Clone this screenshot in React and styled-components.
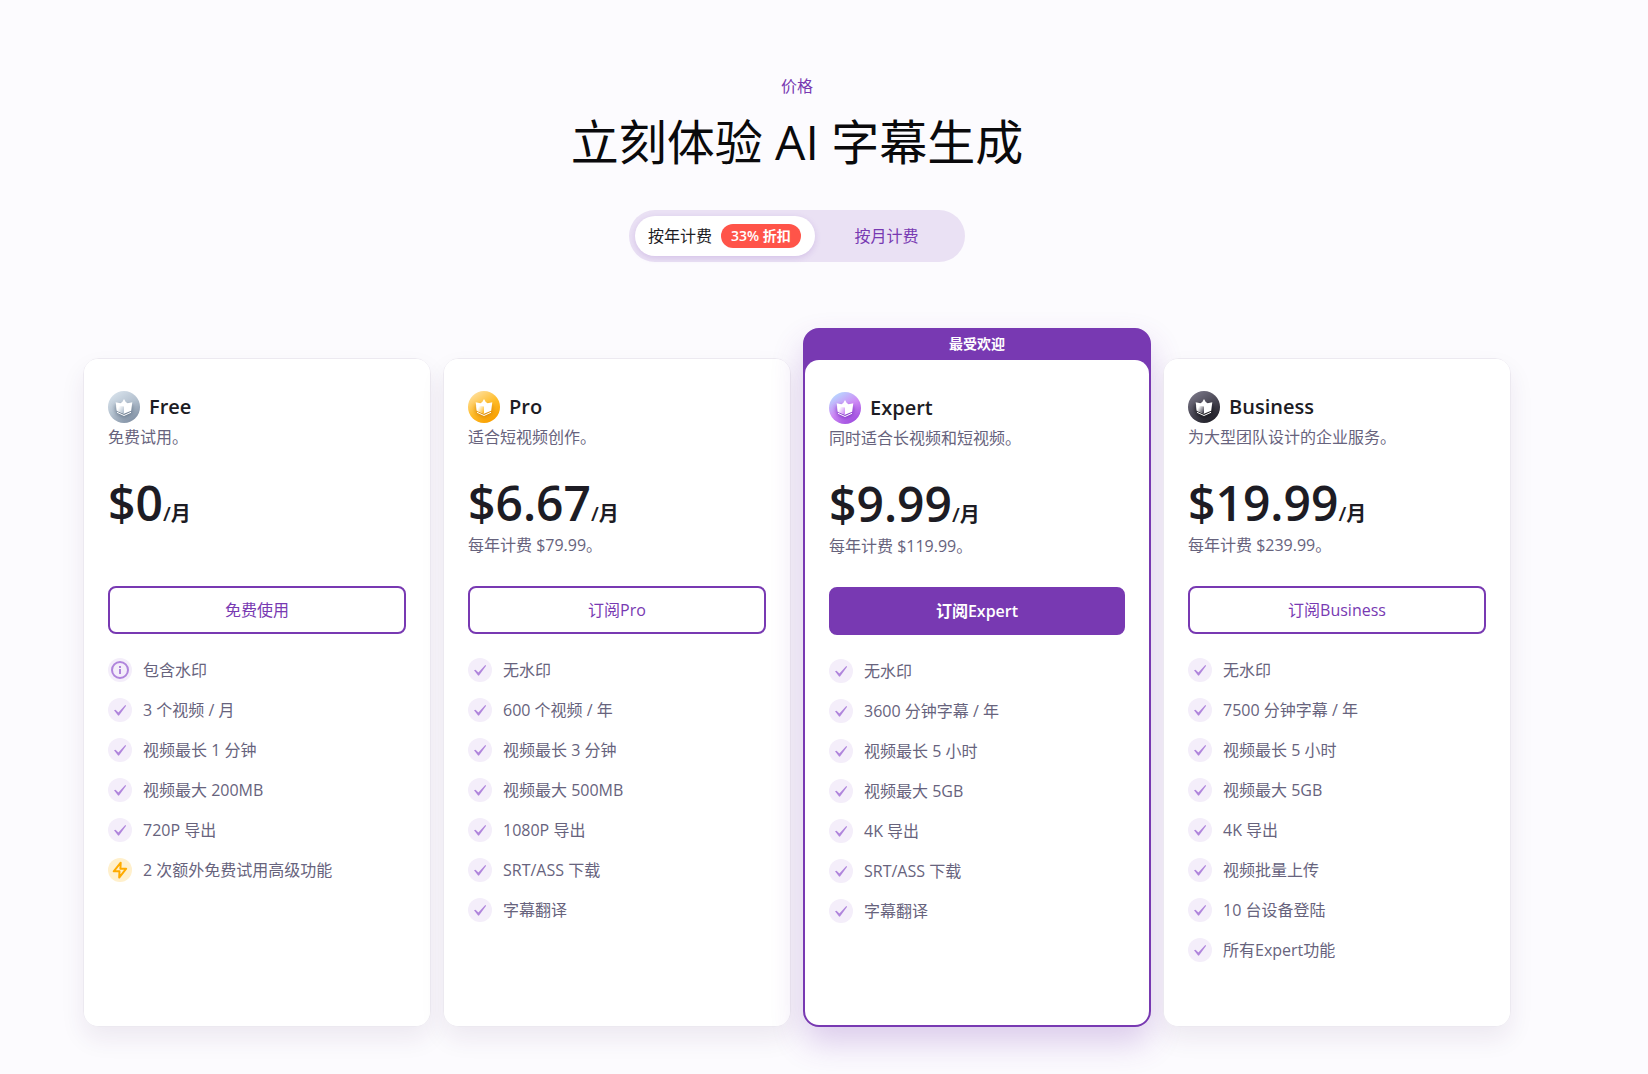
import React, { useState } from 'react';
import styled, { createGlobalStyle } from 'styled-components';

const purple = '#7839b2';
const ink = '#1d1c24';
const muted = '#67637d';

const GlobalStyle = createGlobalStyle`
  * {
    box-sizing: border-box;
  }

  body {
    margin: 0;
    background: #fcfbfe;
    color: ${ink};
    font-family: 'Open Sans', 'Noto Sans CJK SC', sans-serif;
    font-size: 16px;
    line-height: 24px;
  }

  h1, h2, p, ul {
    margin: 0;
    padding: 0;
    font-weight: inherit;
  }

  button {
    border: 0;
    font: inherit;
    cursor: pointer;
  }
`;

const Page = styled.main`
  padding: 74px 137px 47px 83px;
`;

const Header = styled.header`
  display: flex;
  flex-direction: column;
  align-items: center;
  margin-bottom: 66px;
`;

const Eyebrow = styled.p`
  color: ${purple};
`;

const Title = styled.h1`
  margin: 12px 0 36px;
  color: #0a0a0c;
  font-size: 48px;
  line-height: 64px;
`;

const Toggle = styled.div`
  display: flex;
  width: 336px;
  height: 52px;
  padding: 6px;
  border-radius: 26px;
  background: #eae1f4;
`;

const Period = styled.button`
  display: flex;
  align-items: center;
  justify-content: center;
  flex: ${({ $wide }) => ($wide ? 'none' : '1')};
  gap: 9px;
  padding: 0 14px 0 13px;
  border-radius: 20px;
  background: ${({ $active }) => ($active ? '#fff' : 'transparent')};
  box-shadow: ${({ $active }) => ($active ? '0 2px 6px rgba(118, 56, 177, 0.18)' : 'none')};
  color: ${({ $active }) => ($active ? ink : purple)};
`;

const Discount = styled.span`
  padding: 0 10px;
  border-radius: 12px;
  background: #ff5449;
  color: #fff;
  font-size: 14px;
  font-weight: 600;
`;

const Plans = styled.section`
  display: grid;
  grid-template-columns: repeat(4, minmax(0, 1fr));
  gap: 12px;
`;

const Card = styled.article`
  display: flex;
  flex-direction: column;
  margin-top: ${({ $popular }) => ($popular ? 0 : '30px')};
  border: ${({ $popular }) => ($popular ? `2px solid ${purple}` : '1px solid #ece9f0')};
  border-radius: 16px;
  background: ${({ $popular }) => ($popular ? purple : '#fff')};
  box-shadow: ${({ $popular }) =>
    $popular ? '0 16px 32px rgba(118, 56, 177, 0.24)' : '0 12px 24px rgba(60, 30, 90, 0.08)'};
`;

const Ribbon = styled.p`
  height: 30px;
  padding-top: 2px;
  color: #fff;
  font-size: 14px;
  font-weight: 600;
  text-align: center;
`;

const CardBody = styled.div`
  flex: 1;
  padding: 32px 24px 64px;
  border-radius: 14px;
  background: #fff;
`;

const PlanHeading = styled.div`
  display: flex;
  align-items: center;
  gap: 9px;
  height: 32px;
  margin-bottom: 2px;
`;

const PlanName = styled.h2`
  font-size: 20px;
  font-weight: 600;
`;

const Note = styled.p`
  height: 24px;
  color: ${muted};
`;

const Price = styled.p`
  height: 56px;
  margin: 26px 0 2px;
  font-size: 48px;
  font-weight: 600;
  line-height: 56px;
`;

const PerMonth = styled.span`
  font-size: 20px;
  line-height: 24px;
`;

const Subscribe = styled.button`
  display: block;
  width: 100%;
  height: 48px;
  margin: 29px 0 24px;
  border: 2px solid ${purple};
  border-radius: 8px;
  background: ${({ $filled }) => ($filled ? purple : '#fff')};
  color: ${({ $filled }) => ($filled ? '#fff' : purple)};
  font-weight: ${({ $filled }) => ($filled ? 600 : 400)};
`;

const Features = styled.ul`
  display: grid;
  gap: 16px;
  list-style: none;
`;

const Feature = styled.li`
  display: flex;
  align-items: center;
  gap: 11px;
  color: ${muted};
`;

const CrownIcon = ({ id, colors, shade }) => (
  <svg width="32" height="32" viewBox="0 0 32 32" aria-hidden="true">
    <defs>
      <linearGradient id={`${id}-bg`} x1="0.2" y1="0.1" x2="0.75" y2="0.95">
        <stop offset="0" stopColor={colors[0]} />
        <stop offset="0.5" stopColor={colors[1]} />
        <stop offset="1" stopColor={colors[2]} />
      </linearGradient>
      <linearGradient id={`${id}-face`} x1="0.1" y1="0.1" x2="1" y2="0.7">
        <stop offset="0.2" stopColor="#fff" />
        <stop offset="1" stopColor={colors[1]} />
      </linearGradient>
      <filter id={`${id}-blur`} x="-50%" y="-50%" width="200%" height="200%">
        <feGaussianBlur stdDeviation="2" />
      </filter>
    </defs>
    <circle cx="16" cy="16" r="16" fill={`url(#${id}-bg)`} />
    <path d="M7 14h18l-1 9-8 4-8-4z" fill={shade} opacity="0.7" filter={`url(#${id}-blur)`} />
    <path
      d="M16 8q1.500 3.600 3.600 4.300l4.700-1-1.100 8.400L16 22.800l-7.200-3.100-1.100-8.400 4.700 1Q14.500 11.600 16 8z"
      fill="#fff"
    />
    <path d="M8.300 14.500L16 15.500v7.300l-7.200-3.100z" fill={`url(#${id}-face)`} />
    <path d="M9 21.300l7 3.200 7-3.200" fill="none" stroke="#fff" />
  </svg>
);

const FeatureIcon = ({ type }) => {
  if (type === 'info') {
    return (
      <svg width="24" height="24" viewBox="0 0 24 24" aria-hidden="true">
        <circle cx="12" cy="12" r="12" fill="#f4eefa" />
        <circle cx="12" cy="12" r="8" fill="none" stroke="#b085dc" strokeWidth="2" />
        <path d="M11 8h2v2h-2zM11 11h2v5h-2z" fill="#b085dc" />
      </svg>
    );
  }
  if (type === 'bolt') {
    return (
      <svg width="24" height="24" viewBox="0 0 24 24" aria-hidden="true">
        <circle cx="12" cy="12" r="12" fill="#fff0cc" />
        <path
          d="M12.700 4.700l-7 8.600h5.800l-.3 6.300 7-8.900h-5.800z"
          fill="none"
          stroke="#ffab00"
          strokeWidth="2"
          strokeLinejoin="round"
        />
      </svg>
    );
  }
  return (
    <svg width="24" height="24" viewBox="0 0 24 24" aria-hidden="true">
      <circle cx="12" cy="12" r="12" fill="#f4eefa" />
      <path d="M6 12.300l1.500-.5L10.400 14.600 17.300 7l.8.700-6.900 9.500a.8.8 0 0 1-1.300 0z" fill="#b085dc" />
    </svg>
  );
};

const plans = [
  {
    name: 'Free',
    note: '免费试用。',
    price: '$0',
    action: '免费使用',
    colors: ['#d3dee8', '#b4c1cf', '#8493a6'],
    shade: '#59697d',
    features: ['包含水印', '3 个视频 / 月', '视频最长 1 分钟', '视频最大 200MB', '720P 导出', '2 次额外免费试用高级功能'],
    icons: { 0: 'info', 5: 'bolt' },
  },
  {
    name: 'Pro',
    note: '适合短视频创作。',
    price: '$6.67',
    billed: '每年计费 $79.99。',
    action: '订阅Pro',
    colors: ['#ffdc92', '#ffbd2b', '#f9a000'],
    shade: '#cf7c00',
    features: ['无水印', '600 个视频 / 年', '视频最长 3 分钟', '视频最大 500MB', '1080P 导出', 'SRT/ASS 下载', '字幕翻译'],
  },
  {
    name: 'Expert',
    note: '同时适合长视频和短视频。',
    price: '$9.99',
    billed: '每年计费 $119.99。',
    action: '订阅Expert',
    popular: true,
    colors: ['#b9d2ff', '#cf8bf5', '#a04fe0'],
    shade: '#7022bd',
    features: ['无水印', '3600 分钟字幕 / 年', '视频最长 5 小时', '视频最大 5GB', '4K 导出', 'SRT/ASS 下载', '字幕翻译'],
  },
  {
    name: 'Business',
    note: '为大型团队设计的企业服务。',
    price: '$19.99',
    billed: '每年计费 $239.99。',
    action: '订阅Business',
    colors: ['#737080', '#4a4855', '#22212a'],
    shade: '#08080d',
    features: ['无水印', '7500 分钟字幕 / 年', '视频最长 5 小时', '视频最大 5GB', '4K 导出', '视频批量上传', '10 台设备登陆', '所有Expert功能'],
  },
];

const PlanCard = ({ plan }) => (
  <Card $popular={plan.popular}>
    {plan.popular && <Ribbon>最受欢迎</Ribbon>}
    <CardBody>
      <PlanHeading>
        <CrownIcon id={plan.name} colors={plan.colors} shade={plan.shade} />
        <PlanName>{plan.name}</PlanName>
      </PlanHeading>
      <Note>{plan.note}</Note>
      <Price>
        {plan.price}
        <PerMonth>/月</PerMonth>
      </Price>
      <Note>{plan.billed}</Note>
      <Subscribe type="button" $filled={plan.popular}>
        {plan.action}
      </Subscribe>
      <Features>
        {plan.features.map((feature, index) => (
          <Feature key={feature}>
            <FeatureIcon type={plan.icons?.[index]} />
            {feature}
          </Feature>
        ))}
      </Features>
    </CardBody>
  </Card>
);

const App = () => {
  const [yearly, setYearly] = useState(true);

  return (
    <Page>
      <GlobalStyle />
      <Header>
        <Eyebrow>价格</Eyebrow>
        <Title>立刻体验 AI 字幕生成</Title>
        <Toggle>
          <Period type="button" $wide $active={yearly} aria-pressed={yearly} onClick={() => setYearly(true)}>
            按年计费
            <Discount>33% 折扣</Discount>
          </Period>
          <Period type="button" $active={!yearly} aria-pressed={!yearly} onClick={() => setYearly(false)}>
            按月计费
          </Period>
        </Toggle>
      </Header>
      <Plans>
        {plans.map((plan) => (
          <PlanCard key={plan.name} plan={plan} />
        ))}
      </Plans>
    </Page>
  );
};

export default App;
